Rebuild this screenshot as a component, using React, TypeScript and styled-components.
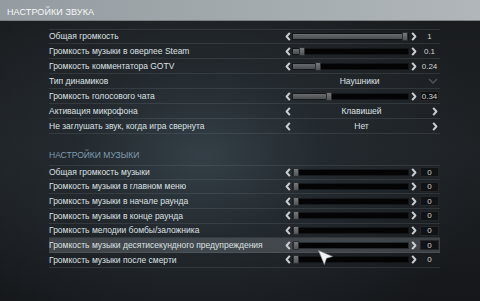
import React from 'react';
import styled, { createGlobalStyle } from 'styled-components';

const Global = createGlobalStyle`
  html, body { margin:0; padding:0; background:#17191b; }
  body { font-family:'Liberation Sans', Arial, sans-serif; }
`;

/* ================= FRAME ================= */
const Screen = styled.div`
  position:relative; width:480px; height:301px; overflow:hidden;
  background:
    radial-gradient(60% 70% at 42% 52%, rgba(54,66,74,.9) 0%, rgba(38,46,52,.6) 45%, rgba(20,22,24,0) 100%),
    linear-gradient(180deg, #191b1d 0%, #1e2225 50%, #15171a 100%);
  display:flex; flex-direction:column;
`;

const Header = styled.header`
  height:21px; flex:0 0 21px; box-sizing:border-box;
  padding-left:7px; display:flex; align-items:center;
  background:linear-gradient(90deg, #959ca1 0%, #a3aaae 50%, #b0b6b9 100%);
  border-bottom:1px solid #7a8084;
`;

const Title = styled.h1`
  margin:0; font-size:9px; font-weight:400; color:#f4f6f7; letter-spacing:.1px;
  padding-top:3px;
`;

const Body = styled.main`
  padding:8px 40px 0 49px; display:flex; flex-direction:column;
`;

const Section = styled.section`
  display:flex; flex-direction:column;
`;

const SectionTitle = styled.h2`
  margin:0; height:20px; display:flex; align-items:center;
  font-size:8.5px; font-weight:400; color:#7f9db1; margin-top:11px;
`;

/* ================= ROWS ================= */
const Row = styled.div<{ $hl?: boolean; $h: number }>`
  height:${({ $h }) => $h}px; box-sizing:border-box;
  display:grid; grid-template-columns:1fr 155px; align-items:center;
  border-bottom:1px solid rgba(120,128,134,.22);
  background:${({ $hl }) => ($hl ? 'rgba(112,118,124,.42)' : 'transparent')};
  &:first-of-type{ border-top:1px solid rgba(120,128,134,.22); }
`;

const Label = styled.span`
  font-size:8.5px; color:#dde0e2; white-space:nowrap; overflow:visible; line-height:1;
`;

const Control = styled.div`
  display:grid; grid-template-columns:8px 115px 12px 19px 1px; align-items:center; height:100%;
`;

const Track = styled.div`
  position:relative; height:5px; background:#040404;
  box-shadow:0 0 0 1px rgba(0,0,0,.35);
`;

const Fill = styled.div`
  height:100%; background:linear-gradient(180deg, #676b6e, #4a4e51);
`;

const Thumb = styled.div`
  position:absolute; top:-2px; width:6px; height:9px; margin-left:-6px;
  background:linear-gradient(180deg, #75797c, #505457);
  border:1px solid #2b2d2f; box-sizing:border-box;
`;

const Value = styled.span<{ $box?: boolean }>`
  height:10px; display:flex; align-items:center; justify-content:center;
  font-size:8px; color:#cfd2d4;
  background:${({ $box }) => ($box ? '#111213' : 'transparent')};
  border:1px solid ${({ $box }) => ($box ? '#242627' : 'transparent')};
  box-sizing:border-box;
`;

const Chev = styled.span<{ $side: 'l' | 'r' }>`
  display:flex; justify-content:${({ $side }) => ($side === 'l' ? 'flex-start' : 'center')};
  align-items:center;
`;

const Cycler = styled.div`
  display:flex; align-items:center; justify-content:space-between; height:100%; padding-right:2px;
`;

const Choice = styled.span`
  font-size:8.5px; color:#dde0e2; line-height:1;
`;

const Cursor = styled.svg`
  position:absolute; left:318px; top:250px;
`;

/* ================= ICONS ================= */
const ChevL = () => (
  <svg width="6" height="9" viewBox="0 0 6 9" aria-hidden>
    <path d="M4.8 0.8 L1.6 4.5 L4.8 8.2" fill="none" stroke="#c9cdd0" strokeWidth="2" strokeLinejoin="round" />
  </svg>
);
const ChevR = () => (
  <svg width="6" height="9" viewBox="0 0 6 9" aria-hidden>
    <path d="M1.2 0.8 L4.4 4.5 L1.2 8.2" fill="none" stroke="#c9cdd0" strokeWidth="2" strokeLinejoin="round" />
  </svg>
);
const ChevD = () => (
  <svg width="10" height="6" viewBox="0 0 10 6" aria-hidden>
    <path d="M1 1 L5 5 L9 1" fill="none" stroke="#4b5054" strokeWidth="1.6" />
  </svg>
);

/* ================= DATA ================= */
type Item =
  | { label: string; kind: 'slider'; v: number; text: string; box?: boolean; hl?: boolean }
  | { label: string; kind: 'drop'; text: string }
  | { label: string; kind: 'cycle'; text: string };

const sound: Item[] = [
  { label: 'Общая громкость', kind: 'slider', v: 1, text: '1' },
  { label: 'Громкость музыки в оверлее Steam', kind: 'slider', v: 0.1, text: '0.1' },
  { label: 'Громкость комментатора GOTV', kind: 'slider', v: 0.24, text: '0.24' },
  { label: 'Тип динамиков', kind: 'drop', text: 'Наушники' },
  { label: 'Громкость голосового чата', kind: 'slider', v: 0.34, text: '0.34', box: true },
  { label: 'Активация микрофона', kind: 'cycle', text: 'Клавишей' },
  { label: 'Не заглушать звук, когда игра свернута', kind: 'cycle', text: 'Нет' },
];

const music: Item[] = [
  { label: 'Общая громкость музыки', kind: 'slider', v: 0, text: '0', box: true },
  { label: 'Громкость музыки в главном меню', kind: 'slider', v: 0, text: '0', box: true },
  { label: 'Громкость музыки в начале раунда', kind: 'slider', v: 0, text: '0', box: true },
  { label: 'Громкость музыки в конце раунда', kind: 'slider', v: 0, text: '0', box: true },
  { label: 'Громкость мелодии бомбы/заложника', kind: 'slider', v: 0, text: '0', box: true },
  { label: 'Громкость музыки десятисекундного предупреждения', kind: 'slider', v: 0, text: '0', box: true, hl: true },
  { label: 'Громкость музыки после смерти', kind: 'slider', v: 0, text: '0' },
];

function Slider({ v, text, box }: { v: number; text: string; box?: boolean }) {
  // thumb sits at the right end of the filled part, minimum 6px
  const pos = Math.max(6, Math.round(v * 115));
  return (
    <Control>
      <Chev $side="l"><ChevL /></Chev>
      <Track>
        <Fill style={{ width: pos }} />
        <Thumb style={{ left: pos }} />
      </Track>
      <Chev $side="r"><ChevR /></Chev>
      <Value $box={box}>{text}</Value>
      <span />
    </Control>
  );
}

function SettingRow({ item, h }: { item: Item; h: number }) {
  return (
    <Row $h={h} $hl={item.kind === 'slider' && item.hl}>
      <Label>{item.label}</Label>
      {item.kind === 'slider' && <Slider v={item.v} text={item.text} box={item.box} />}
      {item.kind === 'drop' && (
        <Cycler>
          <span style={{ width: 6 }} />
          <Choice>{item.text}</Choice>
          <ChevD />
        </Cycler>
      )}
      {item.kind === 'cycle' && (
        <Cycler>
          <ChevL />
          <Choice>{item.text}</Choice>
          <ChevR />
        </Cycler>
      )}
    </Row>
  );
}

export default function App() {
  return (
    <>
      <Global />
      <Screen>
        <Header><Title>НАСТРОЙКИ ЗВУКА</Title></Header>
        <Body>
          <Section>
            {sound.map((it) => <SettingRow key={it.label} item={it} h={15} />)}
          </Section>
          <SectionTitle>НАСТРОЙКИ МУЗЫКИ</SectionTitle>
          <Section>
            {music.map((it) => <SettingRow key={it.label} item={it} h={14.7} />)}
          </Section>
        </Body>
        <Cursor width="16" height="16" viewBox="0 0 16 16" aria-hidden>
          <path d="M0.5 0.5 L14.5 6.5 L8.5 8.3 L6.3 14.5 Z" fill="#f2f3f4" stroke="#8d9194" strokeWidth="0.6" />
        </Cursor>
      </Screen>
    </>
  );
}
